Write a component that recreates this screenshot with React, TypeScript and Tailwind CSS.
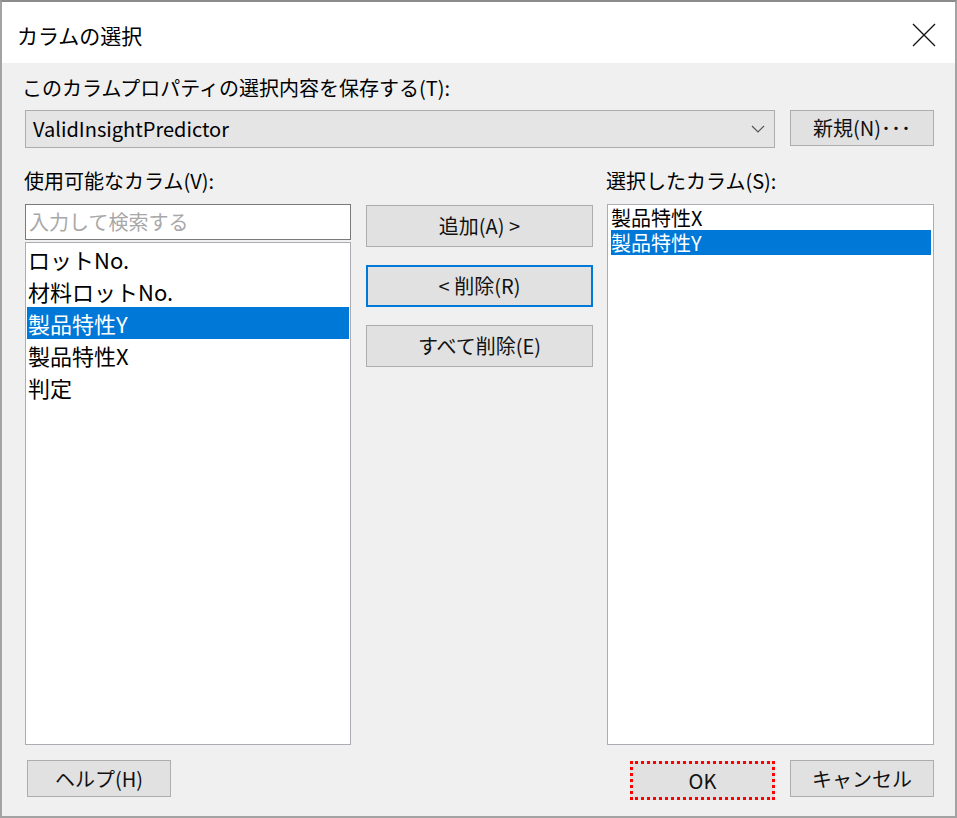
import React from "react";

const FONT = "font-['Noto_Sans_CJK_JP','Noto_Sans',sans-serif]";

function Btn({
  children,
  className = "",
  border = "border border-[#adadad]",
}: {
  children: React.ReactNode;
  className?: string;
  border?: string;
}) {
  return (
    <div
      className={`flex items-center justify-center bg-[#e1e1e1] ${border} text-[20px] leading-none text-[#111] ${className}`}
    >
      {children}
    </div>
  );
}

export default function App() {
  const leftItems = ["ロットNo.", "材料ロットNo.", "製品特性Y", "製品特性X", "判定"];
  const rightItems = ["製品特性X", "製品特性Y"];
  return (
    <div className={`w-[957px] h-[818px] bg-[#f0f0f0] border-2 border-[#a3a3a3] border-t-[#8c8c8c] flex flex-col ${FONT} text-black`}>
      {/* title bar */}
      <div className="h-[61px] bg-white flex items-center justify-between pl-[15px] pr-[19px] shrink-0">
        <div className="text-[21px] leading-none pt-[6px]">カラムの選択</div>
        <svg width="24" height="24" viewBox="0 0 24 24" className="mt-[4px]">
          <path d="M1 1 L23 23 M23 1 L1 23" stroke="#111" strokeWidth="1.3" fill="none" />
        </svg>
      </div>

      {/* body */}
      <div className="flex-1 flex flex-col pl-[23px] pr-[21px] pt-[13px]">
        <div className="text-[20px] leading-[24px] -ml-[3px] h-[24px] whitespace-nowrap">このカラムプロパティの選択内容を保存する(T):</div>

        <div className="mt-[10px] flex gap-[15px] h-[38px]">
          <div className="flex-1 h-[38px] bg-[#e5e5e5] border border-[#adadad] flex items-center justify-between pl-[7px] pr-[9px]">
            <span className="text-[20px] leading-none">ValidInsightPredictor</span>
            <svg width="14" height="8" viewBox="0 0 14 8">
              <path d="M1 1 L7 7 L13 1" stroke="#555" strokeWidth="1.2" fill="none" />
            </svg>
          </div>
          <Btn className="w-[144px] h-[36px]">新規(N)･･･</Btn>
        </div>

        <div className="mt-[21px] flex h-[24px] text-[20px] leading-[24px] whitespace-nowrap">
          <div className="w-[326px] -ml-[1px]">使用可能なカラム(V):</div>
          <div className="w-[227px] ml-[15px]" />
          <div className="ml-[14px]">選択したカラム(S):</div>
        </div>

        <div className="mt-[11px] flex h-[541px]">
          {/* left column */}
          <div className="w-[326px] flex flex-col">
            <div className="h-[36px] bg-white border border-[#7a7a7a] flex items-center pl-[3px]">
              <span className="text-[20px] leading-none text-[#a8a8a8]">入力して検索する</span>
            </div>
            <div className="mt-[2px] flex-1 bg-white border border-[#abadb3] px-[1px]">
              {leftItems.map((t, i) => (
                <div
                  key={t}
                  className={`h-[32px] flex items-center pl-[1px] text-[22px] leading-[32px] ${
                    i === 2 ? "bg-[#0078d7] text-white" : "text-black"
                  }`}
                >
                  {t}
                </div>
              ))}
            </div>
          </div>

          {/* middle buttons */}
          <div className="w-[227px] ml-[15px] flex flex-col gap-[18px] pt-[1px]">
            <Btn className="h-[42px]">追加(A) &gt;</Btn>
            <Btn className="h-[42px]" border="border-2 border-[#0078d7]">&lt; 削除(R)</Btn>
            <Btn className="h-[42px]">すべて削除(E)</Btn>
          </div>

          {/* right list */}
          <div className="w-[327px] ml-[14px] bg-white border border-[#abadb3] pl-[3px] pr-[2px]">
            {rightItems.map((t, i) => (
              <div
                key={t}
                className={`h-[25px] flex items-center text-[20px] leading-[25px] ${
                  i === 1 ? "bg-[#0078d7] text-white" : "text-black"
                }`}
              >
                {t}
              </div>
            ))}
          </div>
        </div>

        {/* bottom buttons */}
        <div className="mt-[15px] flex items-start">
          <Btn className="w-[144px] h-[37px] ml-[2px]">ヘルプ(H)</Btn>
          <div className="flex-1" />
          <Btn className="w-[145px] h-[39px] mt-[1px]" border="border-[3px] border-dotted border-[#ff0000]">OK</Btn>
          <Btn className="w-[144px] h-[37px] ml-[15px]">キャンセル</Btn>
        </div>
      </div>
    </div>
  );
}
